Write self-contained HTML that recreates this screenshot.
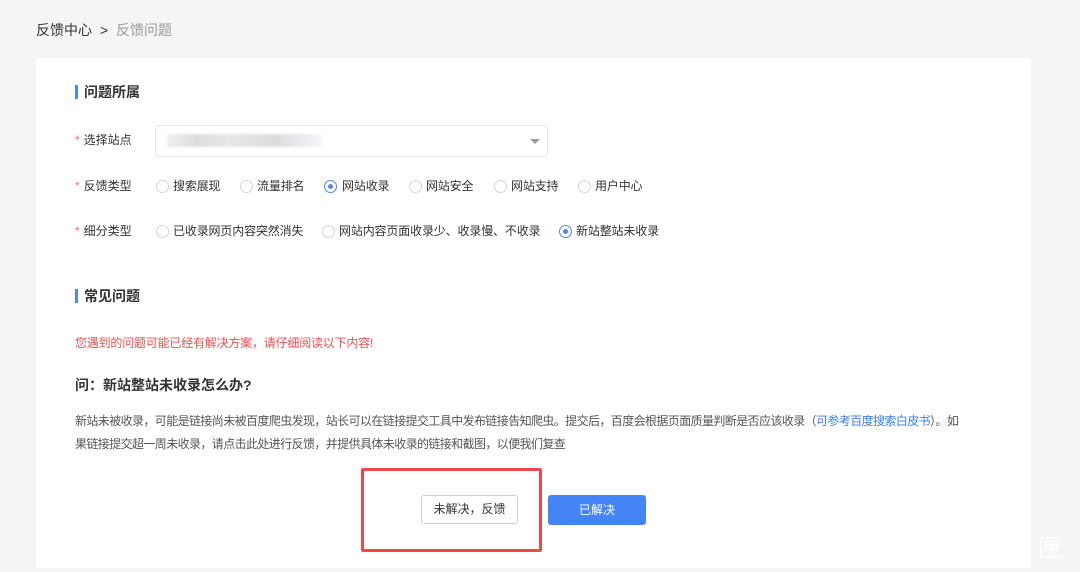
<!DOCTYPE html>
<html><head><meta charset="utf-8"><style>
*{margin:0;padding:0;box-sizing:border-box}
body{width:1080px;height:572px;background:#f5f5f5;font-family:"Liberation Sans","Noto Sans CJK SC",sans-serif;position:relative;overflow:hidden;color:#333}
.a{position:absolute;white-space:nowrap}
.card{position:absolute;left:36px;top:58px;width:995px;height:510px;background:#fff;border-radius:2px}
.h{font-size:14px;font-weight:bold;color:#333;line-height:16px}
.bar{position:absolute;width:3px;height:14px;background:#4e86f7}
.lab{font-size:12px;color:#333;line-height:14px}
.lab b{color:#f56c6c;font-weight:normal;margin-right:4px}
.r{position:absolute;width:13px;height:13px;border:1px solid #d4d4d4;border-radius:50%;background:#fff}
.r.on{border-color:#4e86f7}
.r.on:after{content:"";position:absolute;left:3px;top:3px;width:5px;height:5px;border-radius:50%;background:#4e86f7}
.t{font-size:12px;color:#333;line-height:14px;letter-spacing:-0.15px}
</style></head><body>
<div class="a" style="left:36px;top:20px;font-size:14px;color:#333">反馈中心 <span style="margin:0 4px">&gt;</span> <span style="color:#999">反馈问题</span></div>
<div class="card"></div>
<div class="bar" style="left:75px;top:85px"></div>
<div class="a h" style="left:84px;top:84px">问题所属</div>
<div class="a lab" style="left:75px;top:133px"><b>*</b>选择站点</div>
<div class="a" style="left:155px;top:125px;width:393px;height:32px;border:1px solid #e4e4e4;border-radius:3px"></div>
<div class="a" style="left:167px;top:134px;width:155px;height:13px;background:linear-gradient(90deg,#eee,#ddd 20%,#e8e8e8 40%,#dcdcdc 70%,#f5f7f9);filter:blur(1px)"></div>
<div class="a" style="left:530px;top:139px;width:0;height:0;border-left:5px solid transparent;border-right:5px solid transparent;border-top:5px solid #999"></div>

<div class="a lab" style="left:75px;top:179px"><b>*</b>反馈类型</div>
<div class="r" style="left:156px;top:180px"></div><div class="a t" style="left:173px;top:179px">搜索展现</div>
<div class="r" style="left:240px;top:180px"></div><div class="a t" style="left:257px;top:179px">流量排名</div>
<div class="r on" style="left:324px;top:180px"></div><div class="a t" style="left:342px;top:179px">网站收录</div>
<div class="r" style="left:409px;top:180px"></div><div class="a t" style="left:426px;top:179px">网站安全</div>
<div class="r" style="left:494px;top:180px"></div><div class="a t" style="left:511px;top:179px">网站支持</div>
<div class="r" style="left:578px;top:180px"></div><div class="a t" style="left:595px;top:179px">用户中心</div>

<div class="a lab" style="left:75px;top:224px"><b>*</b>细分类型</div>
<div class="r" style="left:156px;top:225px"></div><div class="a t" style="left:173px;top:224px">已收录网页内容突然消失</div>
<div class="r" style="left:322px;top:225px"></div><div class="a t" style="left:339px;top:224px">网站内容页面收录少、收录慢、不收录</div>
<div class="r on" style="left:559px;top:225px"></div><div class="a t" style="left:576px;top:224px">新站整站未收录</div>

<div class="bar" style="left:75px;top:289px"></div>
<div class="a h" style="left:84px;top:288px">常见问题</div>
<div class="a" style="left:75px;top:334px;font-size:12px;color:#f0504f;letter-spacing:-0.2px">您遇到的问题可能已经有解决方案，请仔细阅读以下内容!</div>
<div class="a" style="left:75px;top:375px;font-size:14px;font-weight:bold;color:#333">问：新站整站未收录怎么办?</div>
<div class="a" style="left:75px;top:410px;font-size:12px;color:#555;line-height:23px;letter-spacing:-0.6px">新站未被收录，可能是链接尚未被百度爬虫发现，站长可以在链接提交工具中发布链接告知爬虫。提交后，百度会根据页面质量判断是否应该收录（<span style="color:#3f7ef0">可参考百度搜索白皮书</span>）。如<br>果链接提交超一周未收录，请点击此处进行反馈，并提供具体未收录的链接和截图，以便我们复查</div>

<div class="a" style="left:361px;top:468px;width:181px;height:84px;border:3px solid #ea4a4a;border-radius:2px"></div>
<div class="a" style="left:421px;top:495px;width:97px;height:29px;border:1px solid #d0d0d0;border-radius:3px;font-size:12px;color:#333;text-align:center;line-height:27px">未解决，反馈</div>
<div class="a" style="left:548px;top:495px;width:98px;height:30px;background:#4584f7;border-radius:3px;font-size:12px;color:#fff;text-align:center;line-height:30px">已解决</div>
<div class="a" style="left:1038px;top:528px;font-size:24px;color:#fff;opacity:.9">匣</div>
</body></html>
